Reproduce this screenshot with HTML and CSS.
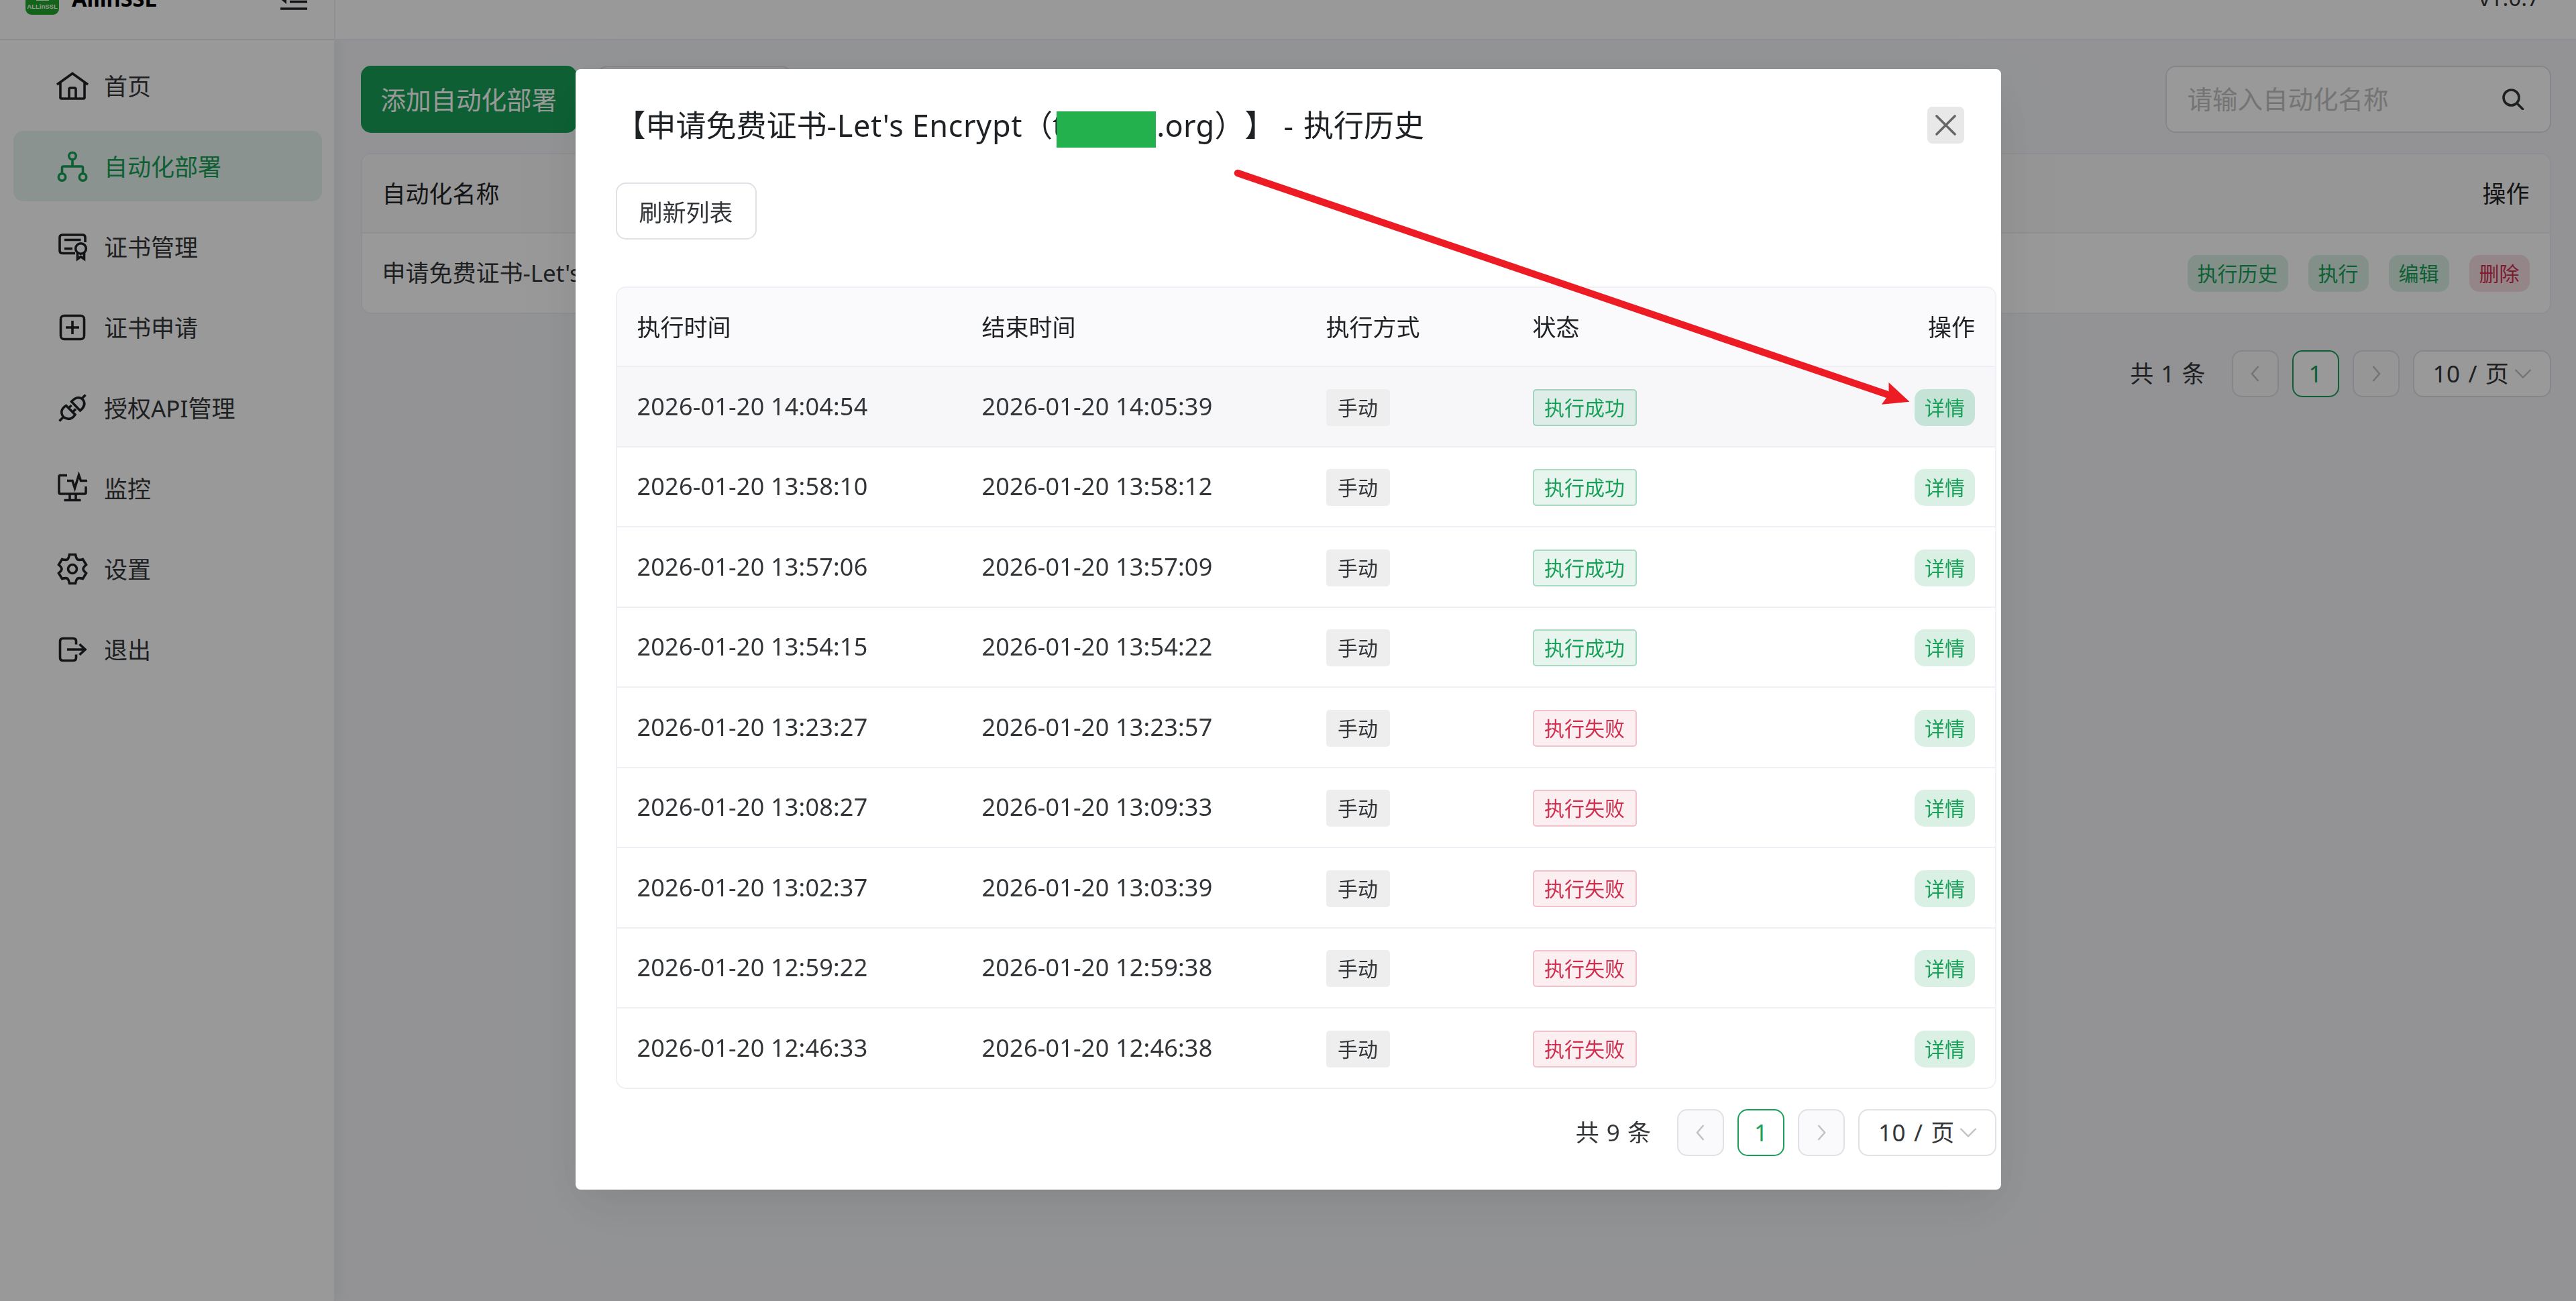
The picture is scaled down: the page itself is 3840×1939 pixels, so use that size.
FILE: index.html
```html
<!DOCTYPE html>
<html lang="zh-CN">

<head>
  <meta charset="utf-8">
  <title>AllinSSL</title>
  <link rel="stylesheet" href="styles.css">
</head>

<body>
  <div class="layout">
    <aside class="sidebar">
      <div class="sidebar-top">
        <div class="logo">ALLinSSL</div>
        <span class="brand">AllinSSL</span>
        <svg class="fold" viewBox="0 0 40 36" fill="none" stroke="currentColor" stroke-width="3.4">
          <path d="M0 1.7h40M14 12h26M14 22.5h26M0 33h40" />
          <path d="M9 11v15l-9-7.500z" fill="currentColor" stroke="none" />
        </svg>
      </div>
      <nav class="menu">
        <a class="menu-item">
          <svg viewBox="0 0 50 50"><path d="M2 23L25 6.500 48 23M7 20v22.500q0 1.500 1.500 1.500h33q1.500 0 1.500-1.500V20M20 44V30q0-2 2-2h6q2 0 2 2v14" /></svg>
          <span>首页</span>
        </a>
        <a class="menu-item active">
          <svg viewBox="0 0 50 50"><circle cx="25" cy="9.500" r="5.200" /><circle cx="9.500" cy="41" r="5.200" /><circle cx="40.500" cy="41" r="5.200" /><path d="M25 15v10M9.500 35.500V27q0-2 2-2h27q2 0 2 2v8.500" /></svg>
          <span>自动化部署</span>
        </a>
        <a class="menu-item">
          <svg viewBox="0 0 50 50"><path d="M29 34.500H10q-4 0-4-4V11q0-4 4-4h30q4 0 4 4v7M13 14.500h24.500M13 27.500h12" /><circle cx="37.500" cy="27.500" r="7.800" /><path d="M32.500 34v9l5-3.500 5 3.500v-9" /></svg>
          <span>证书管理</span>
        </a>
        <a class="menu-item">
          <svg viewBox="0 0 50 50"><rect x="7.500" y="7.500" width="35" height="35" rx="5" /><path d="M25 15v20M15 25h20" /></svg>
          <span>证书申请</span>
        </a>
        <a class="menu-item">
          <svg viewBox="0 0 50 50"><path d="M5.500 44.500l6-6M38.500 11.500l6-6M11.500 38.500q-7-10 4-17l13.500 13.500q-7 10.500-17.500 3.500zM23.500 15.500q9-10 17-3 6 8-4 16.500zM18.500 26l5-5M25 31.500l5-5" /></svg>
          <span>授权API管理</span>
        </a>
        <a class="menu-item">
          <svg viewBox="0 0 50 50"><path d="M17 5.500H7q-2 0-2 2V31q0 2 2 2h36q2 0 2-2V22M17 13.500h8l3.500 11 6-19.500 3 8.500H47M21 33v9M30 33v9M12.500 42.500h25" /></svg>
          <span>监控</span>
        </a>
        <a class="menu-item">
          <svg viewBox="0 0 50 50"><circle cx="25" cy="25" r="6.500" /><path d="M20.500 3.500h9q1.300 5.500 2.500 7 2.500 1.800 8.500 0l5 8.200q-4.500 4-4.500 6.300t4.500 6.300l-5 8.200q-6-1.800-8.500 0-1.200 1.500-2.500 7h-9q-1.300-5.500-2.500-7-2.500-1.800-8.500 0l-5-8.200q4.500-4 4.500-6.300t-4.500-6.300l5-8.200q6 1.800 8.500 0 1.200-1.500 2.500-7z" /></svg>
          <span>设置</span>
        </a>
        <a class="menu-item">
          <svg viewBox="0 0 50 50"><path d="M30.500 17.500V13q0-4.500-4.500-4.500H11Q6.500 8.500 6.500 13v24q0 4.500 4.500 4.500h15q4.500 0 4.500-4.500v-4.500M17 25h27M35.500 17l8.500 8-8.500 8" /></svg>
          <span>退出</span>
        </a>
      </nav>
    </aside>

    <div class="main">
      <header class="topbar"><span class="version">v1.0.7</span></header>
      <div class="content">
        <div class="toolbar">
          <button class="btn btn-primary">添加自动化部署</button>
          <button class="btn btn-default"></button>
          <div class="search">
            <span>请输入自动化名称</span>
            <svg viewBox="0 0 32 32"><circle cx="13.500" cy="13.500" r="11.500" /><path d="M22 22l8.500 8.500" /></svg>
          </div>
        </div>
        <div class="table">
          <div class="row head"><span>自动化名称</span><span>操作</span></div>
          <div class="row">
            <span>申请免费证书-Let's Encrypt</span>
            <div class="actions">
              <button class="tiny">执行历史</button>
              <button class="tiny">执行</button>
              <button class="tiny">编辑</button>
              <button class="tiny danger">删除</button>
            </div>
          </div>
        </div>
        <div class="pagination">
          <span class="total">共 1 条</span>
          <span class="page disabled"><svg viewBox="0 0 24 24"><path d="M16.500 1L7 12l9.500 11" /></svg></span>
          <span class="page current">1</span>
          <span class="page disabled"><svg viewBox="0 0 24 24"><path d="M7.500 1L17 12 7.500 23" /></svg></span>
          <span class="page-size">10 / 页<svg viewBox="0 0 26 26"><path d="M1.500 7L13 18.500 24.500 7" /></svg></span>
        </div>
      </div>
    </div>
  </div>

  <div class="mask">
    <div class="modal">
      <div class="modal-header">
        <h2 class="modal-title">【申请免费证书<span class="latin">-Let's Encrypt</span>（<span class="domain">t<i class="redact"></i></span><span class="tld">.org</span>）】<span class="dash">-</span>执行历史</h2>
        <button class="close"><svg viewBox="0 0 32 32"><path d="M2 2l28 28M30 2L2 30" /></svg></button>
      </div>
      <button class="btn btn-refresh">刷新列表</button>

      <div class="table history">
        <div class="row head">
          <span>执行时间</span><span>结束时间</span><span>执行方式</span><span>状态</span><span class="right">操作</span>
        </div>
        <div id="rows"></div>
      </div>

      <div class="pagination">
        <span class="total">共 9 条</span>
        <span class="page disabled"><svg viewBox="0 0 24 24"><path d="M16.500 1L7 12l9.500 11" /></svg></span>
        <span class="page current">1</span>
        <span class="page disabled"><svg viewBox="0 0 24 24"><path d="M7.500 1L17 12 7.500 23" /></svg></span>
        <span class="page-size">10 / 页<svg viewBox="0 0 26 26"><path d="M1.500 7L13 18.500 24.500 7" /></svg></span>
      </div>
    </div>
  </div>

  <svg class="arrow" viewBox="0 0 3840 1939">
    <path d="M1845 258L2812 587.500" stroke="#ed1c24" stroke-width="10.500" stroke-linecap="round" />
    <path d="M2815.500 570L2846.500 598.700 2804.800 602.700 2812 593 2815.500 583z" fill="#ed1c24" stroke="none" />
  </svg>

  <script>
    const history = [
      ['2026-01-20 14:04:54', '2026-01-20 14:05:39', true],
      ['2026-01-20 13:58:10', '2026-01-20 13:58:12', true],
      ['2026-01-20 13:57:06', '2026-01-20 13:57:09', true],
      ['2026-01-20 13:54:15', '2026-01-20 13:54:22', true],
      ['2026-01-20 13:23:27', '2026-01-20 13:23:57', false],
      ['2026-01-20 13:08:27', '2026-01-20 13:09:33', false],
      ['2026-01-20 13:02:37', '2026-01-20 13:03:39', false],
      ['2026-01-20 12:59:22', '2026-01-20 12:59:38', false],
      ['2026-01-20 12:46:33', '2026-01-20 12:46:38', false]
    ];

    // 渲染执行历史
    document.getElementById('rows').innerHTML = history.map(([start, end, ok], i) => `
      <div class="row${i === 0 ? ' hover' : ''}">
        <span class="time">${start}</span>
        <span class="time">${end}</span>
        <span class="tag">手动</span>
        <span class="tag ${ok ? 'success' : 'error'}">${ok ? '执行成功' : '执行失败'}</span>
        <button class="tiny right">详情</button>
      </div>`).join('');
  </script>
</body>

</html>
```

FILE: styles.css
```css
* {
  margin: 0;
  padding: 0;
  box-sizing: border-box;
}

body {
  width: 3840px;
  height: 1939px;
  overflow: hidden;
  font-family: "Noto Sans", "Noto Sans CJK SC", sans-serif;
  font-size: 35px;
  line-height: 56px;
  color: #333639;
  background: #f5f6f9;
}

button {
  font-family: inherit;
  border: none;
}

svg {
  fill: none;
  stroke: currentColor;
  flex-shrink: 0;
}

.layout {
  display: flex;
  height: 1939px;
}

/* sidebar */
.sidebar {
  width: 500px;
  background: #fff;
  border-right: 2px solid #efeff5;
  box-shadow: 5px 0 20px rgba(0, 0, 0, 0.05);
}

.sidebar-top {
  height: 128px;
  margin-top: -68px;
  padding: 0 40px 0 38px;
  border-bottom: 2px solid #e8e8f2;
  display: flex;
  align-items: center;
}

.logo {
  width: 50px;
  height: 50px;
  margin-top: 4px;
  padding-top: 30px;
  border-radius: 9px;
  background: linear-gradient(#fff, #fff) 16px 26px / 19px 3px no-repeat, #20a52c;
  color: #fff;
  font: bold 9.5px/16px "Liberation Sans", sans-serif;
  text-align: center;
}

.brand {
  margin-left: 19px;
  margin-top: 5px;
  font: bold 32.5px/50px "Noto Sans", sans-serif;
  color: #000;
}

.fold {
  width: 40px;
  height: 36px;
  margin: 5px 0 0 auto;
  color: #1f2225;
}

.menu {
  display: flex;
  flex-direction: column;
  gap: 15px;
  padding: 15px 18px 0 20px;
}

.menu-item {
  height: 105px;
  padding-left: 63px;
  display: flex;
  align-items: center;
  gap: 22px;
  border-radius: 15px;
}

.menu-item svg {
  width: 50px;
  height: 50px;
  stroke-width: 3.6;
  color: #1f2225;
}

.menu-item span {
  padding-top: 2px;
}

.menu-item.active {
  background: rgba(24, 160, 88, 0.1);
}

.menu-item.active,
.menu-item.active svg {
  color: #18a058;
}

/* page */
.main {
  flex: 1;
}

.topbar {
  height: 60px;
  background: #fff;
  border-bottom: 2px solid #efeff5;
  padding-right: 54px;
  display: flex;
  justify-content: flex-end;
}

.version {
  margin-top: -31px;
  font-size: 33px;
}

.content {
  padding: 38px 37.5px 0;
}

.toolbar {
  display: flex;
  gap: 30px;
}

.btn {
  height: 100px;
  padding: 0 30px;
  border-radius: 15px;
  font-size: 37.5px;
}

.btn-primary {
  padding-bottom: 3px;
  background: #18a058;
  color: #fff;
}

.btn-default {
  width: 290px;
  background: transparent;
  border: 2px solid #e0e0e6;
}

.search {
  margin-left: auto;
  width: 575px;
  height: 100px;
  padding: 0 39px 0 31px;
  border: 2px solid #e0e0e6;
  border-radius: 15px;
  background: #fff;
  color: #c2c2c2;
  font-size: 37.5px;
  display: flex;
  align-items: center;
  justify-content: space-between;
}

.search svg {
  width: 32px;
  height: 32px;
  color: #333639;
  stroke-width: 3.6;
  stroke-linecap: round;
}

.table {
  margin-top: 30px;
  border: 2px solid #efeff5;
  border-radius: 15px;
  background: #fff;
  overflow: hidden;
}

.row {
  height: 118px;
  padding: 0 30px;
  display: flex;
  align-items: center;
  justify-content: space-between;
}

.row.head {
  padding-top: 2px;
  background: #fafafc;
  color: #1f2225;
  border-bottom: 2px solid #efeff5;
}

.actions {
  display: flex;
  gap: 30px;
}

.tiny {
  height: 55px;
  padding: 0 15px;
  border-radius: 15px;
  font-size: 30px;
  line-height: 55px;
  background: rgba(24, 160, 88, 0.16);
  color: #18a058;
}

.tiny.danger {
  background: rgba(208, 48, 80, 0.16);
  color: #d03050;
}

.pagination {
  margin-top: 54px;
  display: flex;
  align-items: center;
  justify-content: flex-end;
  gap: 20px;
}

.total {
  margin-right: 19px;
  word-spacing: 2px;
}

.page,
.page-size {
  height: 70px;
  border: 2px solid #e0e0e6;
  border-radius: 15px;
  display: flex;
  align-items: center;
  background: #fff;
}

.page {
  width: 70px;
  justify-content: center;
}

.page.disabled {
  background: #fafafc;
}

.page svg {
  width: 24px;
  height: 24px;
  stroke-width: 2.6;
  color: #c2c2c2;
}

.page.current {
  border-color: #18a058;
  color: #18a058;
}

.page-size {
  width: 206px;
  padding: 0 27px 0 28px;
  justify-content: space-between;
  letter-spacing: 0.6px;
  word-spacing: 2px;
}

.page-size svg {
  width: 26px;
  height: 26px;
  stroke-width: 2.4;
  color: #c2c2c2;
}

/* modal */
.mask {
  position: fixed;
  inset: 0;
  background: rgba(0, 0, 0, 0.4);
  display: flex;
  justify-content: center;
  align-items: flex-start;
  padding-top: 103px;
}

.modal {
  width: 2125px;
  height: 1670px;
  padding: 0 6.5px 0 60px;
  border-radius: 7.5px;
  background: #fff;
  box-shadow: 0 15px 40px -22px rgba(0, 0, 0, 0.08), 0 22px 70px rgba(0, 0, 0, 0.05), 0 30px 120px 40px rgba(0, 0, 0, 0.03);
}

.modal-header {
  height: 169px;
  padding: 0 48px 3px 0;
  display: flex;
  align-items: center;
  justify-content: space-between;
}

.modal-title {
  padding-top: 1px;
  font-size: 45px;
  font-weight: 400;
  color: #1f2225;
  white-space: nowrap;
  text-spacing-trim: space-all;
}

.latin {
  letter-spacing: 0.65px;
}

.tld {
  letter-spacing: 0.3px;
}

.domain {
  display: inline-block;
  position: relative;
  width: 155px;
}

.redact {
  position: absolute;
  left: 6px;
  top: 7px;
  width: 148px;
  height: 54px;
  background: #22b14c;
}

.dash {
  padding: 0 15px 0 13px;
}

.close {
  width: 55px;
  height: 55px;
  border-radius: 7.5px;
  background: #e8e8e8;
  color: #666;
  display: flex;
  align-items: center;
  justify-content: center;
}

.close svg {
  width: 31px;
  height: 31px;
  stroke-width: 3.6;
  stroke-linecap: round;
}

.btn-refresh {
  display: block;
  width: 210px;
  height: 85px;
  background: #fff;
  border: 2px solid #e0e0e6;
  font-size: 35px;
  padding: 0;
  color: #333639;
}

.history {
  margin-top: 70px;
}

.history .row {
  display: grid;
  grid-template-columns: 514px 513px 308px 359px 1fr;
  justify-content: stretch;
  justify-items: start;
  height: 119.5px;
  border-bottom: 2px solid #efeff5;
}

.history .row.head {
  height: 118px;
}

.history #rows .row:last-child {
  border-bottom: none;
  height: 117.5px;
}

.history .row.hover {
  background: #f7f7fa;
}

.history .row .tag,
.history .row .tiny {
  margin-top: 3px;
}

.row.hover .tiny {
  background: rgba(24, 160, 88, 0.22);
}

.history .right {
  justify-self: end;
}

.time {
  font-size: 36px;
  letter-spacing: 0.2px;
}

.tag {
  height: 55px;
  padding: 0 17.5px;
  border-radius: 5px;
  background: #eee;
  font-size: 30px;
  line-height: 55px;
}

.tag.success {
  box-shadow: inset 0 0 0 2px rgba(24, 160, 88, 0.3);
  background: rgba(24, 160, 88, 0.1);
  color: #18a058;
}

.tag.error {
  box-shadow: inset 0 0 0 2px rgba(208, 48, 80, 0.23);
  background: rgba(208, 48, 80, 0.08);
  color: #d03050;
}

.modal .pagination {
  margin-top: 30px;
}

.arrow {
  position: fixed;
  left: 0;
  top: 0;
  width: 3840px;
  height: 1939px;
}
```
